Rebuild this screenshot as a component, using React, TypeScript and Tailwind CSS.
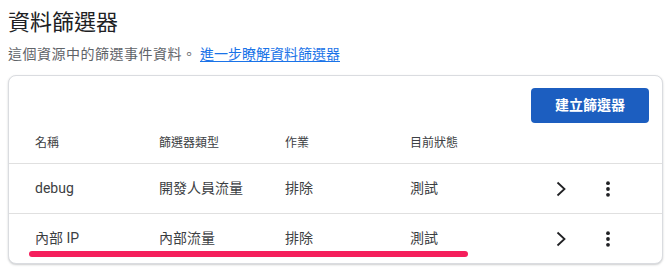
import React from "react";

const font = { fontFamily: 'Roboto, "Noto Sans CJK TC", "Noto Sans", sans-serif' };

const filters = [
  { name: "debug", type: "開發人員流量", action: "排除", status: "測試" },
  { name: "內部 IP", type: "內部流量", action: "排除", status: "測試" },
];

function Chevron() {
  return (
    <svg width="10" height="16" viewBox="0 0 10 16" fill="none">
      <polyline points="1.5,1.5 8.5,8 1.5,14.5" stroke="#202124" strokeWidth="1.8" />
    </svg>
  );
}

function MoreVert() {
  return (
    <svg width="6" height="16" viewBox="0 0 6 16" fill="#202124">
      <circle cx="3" cy="2.2" r="1.9" />
      <circle cx="3" cy="8" r="1.9" />
      <circle cx="3" cy="13.8" r="1.9" />
    </svg>
  );
}

export default function App() {
  return (
    <div className="min-h-screen bg-white px-2 pt-[9px]" style={font}>
      <h1 className="text-[22px] leading-[28px] font-normal text-[#202124]">資料篩選器</h1>
      <p className="mt-[7px] text-[14px] leading-[20px] text-[#5f6368]">
        <span className="tracking-[0.5px]">這個資源中的篩選事件資料。</span>{" "}
        <a href="#" className="text-[#1a73e8] underline underline-offset-2">
          進一步瞭解資料篩選器
        </a>
      </p>

      {/* Filters card */}
      <div className="mt-[11px] rounded-[8px] border border-[#dadce0] bg-white shadow-[0_1px_2px_rgba(60,64,67,0.25)]">
        <div className="flex justify-end pt-[12px] pr-[13px]">
          <button className="h-[35px] w-[118px] rounded-[4px] bg-[#1c5ec0] text-[14px] font-bold text-white">
            建立篩選器
          </button>
        </div>

        <div className="flex h-[40px] items-center pl-[26px] text-[12px] text-[#3c4043]">
          <span className="w-[124px]">名稱</span>
          <span className="w-[126px]">篩選器類型</span>
          <span className="w-[125px]">作業</span>
          <span className="w-[146px]">目前狀態</span>
        </div>

        {filters.map((f, i) => (
          <div
            key={f.name}
            className="relative flex h-[50px] items-center border-t border-[#e0e0e0] pl-[26px] text-[14px] text-[#3c4043]"
          >
            <span className="w-[124px]">{f.name}</span>
            <span className="w-[126px]">{f.type}</span>
            <span className="w-[125px]">{f.action}</span>
            <span className="w-[146px]">{f.status}</span>
            <span className="flex w-[49px]">
              <Chevron />
            </span>
            <MoreVert />
            {i === filters.length - 1 && (
              <div className="absolute left-[20px] top-[37px] h-[6px] w-[439px] rounded-full bg-[#f51f5c]" />
            )}
          </div>
        ))}
      </div>
    </div>
  );
}
